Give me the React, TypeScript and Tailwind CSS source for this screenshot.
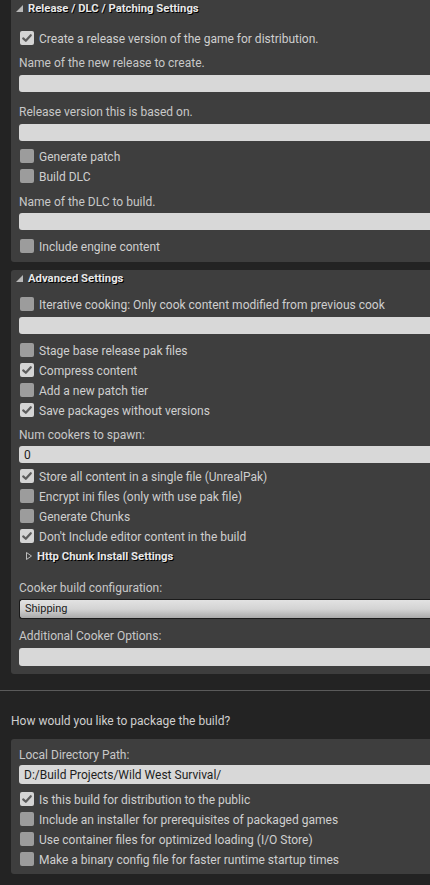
import React from "react";

function Box({ checked }: { checked?: boolean }) {
  return (
    <div
      className={`w-[14px] h-[14px] rounded-[2px] shrink-0 flex items-center justify-center ${
        checked ? "bg-[#d4d4d4]" : "bg-[#9c9c9c]"
      }`}
    >
      {checked && (
        <svg width="12" height="12" viewBox="0 0 12 12">
          <path d="M2.2 6.4 L4.8 8.8 L9.8 3.2" fill="none" stroke="#5c5c5c" strokeWidth="2.2" strokeLinecap="round" strokeLinejoin="round" />
        </svg>
      )}
    </div>
  );
}

function Check({ label, checked, className = "" }: { label: string; checked?: boolean; className?: string }) {
  return (
    <div className={`h-[20px] flex items-center pl-[9px] ${className}`}>
      <Box checked={checked} />
      <span className="ml-[5px] pt-[2px] text-[12px] text-[#cfcfcf] whitespace-nowrap">{label}</span>
    </div>
  );
}

function Label({ text, className = "" }: { text: string; className?: string }) {
  return (
    <div className={`h-[20px] flex items-center pl-[8px] text-[12px] text-[#c8c8c8] whitespace-nowrap ${className}`}>
      <span className="pt-[2px]">{text}</span>
    </div>
  );
}

function Input({ value, className = "", h = "h-[17px]" }: { value?: string; className?: string; h?: string }) {
  return (
    <div
      className={`ml-[8px] ${h} bg-[#d8d8d8] rounded-l-[3px] flex items-center pl-[5px] text-[12px] text-[#1e1e1e] whitespace-nowrap ${className}`}
    >
      <span className="pt-[1px]">{value}</span>
    </div>
  );
}

function Header({ text }: { text: string }) {
  return (
    <div className="h-[17px] flex items-center pl-[5px]">
      <svg width="7" height="7" viewBox="0 0 7 7" className="shrink-0">
        <polygon points="7,0 7,7 0,7" fill="#b8b8b8" />
      </svg>
      <span className="ml-[5px] pt-[2px] text-[11.3px] font-bold text-[#e8e8e8] [text-shadow:1px_1px_0_#000] whitespace-nowrap">
        {text}
      </span>
    </div>
  );
}

export default function App() {
  return (
    <div
      className="w-[430px] h-[885px] overflow-hidden bg-[#232323] flex flex-col"
      style={{ fontFamily: "Roboto, 'Noto Sans', sans-serif" }}
    >
      {/* Panel 1 */}
      <div className="ml-[11px] bg-[#3e3e3e] rounded-bl-[3px] pb-[6px]">
        <Header text="Release / DLC / Patching Settings" />
        <Check className="mt-[11px]" checked label="Create a release version of the game for distribution." />
        <Label className="mt-[4px]" text="Name of the new release to create." />
        <Input className="mt-[3px]" />
        <Label className="mt-[9px]" text="Release version this is based on." />
        <Input className="mt-[3px]" />
        <Check className="mt-[5px]" label="Generate patch" />
        <Check label="Build DLC" />
        <Label className="mt-[5px]" text="Name of the DLC to build." />
        <Input className="mt-[2px]" />
        <Check className="mt-[6px]" label="Include engine content" />
      </div>

      {/* Panel 2 */}
      <div className="ml-[11px] mt-[8px] bg-[#3e3e3e] rounded-l-[3px] pb-[8px]">
        <Header text="Advanced Settings" />
        <Check className="mt-[7px]" label="Iterative cooking: Only cook content modified from previous cook" />
        <Input className="mt-[3px]" />
        <Check className="mt-[6px]" label="Stage base release pak files" />
        <Check checked label="Compress content" />
        <Check label="Add a new patch tier" />
        <Check checked label="Save packages without versions" />
        <Label className="mt-[4px]" text="Num cookers to spawn:" />
        <Input className="mt-[2px]" value="0" />
        <Check className="mt-[3px]" checked label="Store all content in a single file (UnrealPak)" />
        <Check label="Encrypt ini files (only with use pak file)" />
        <Check label="Generate Chunks" />
        <Check checked label="Don't Include editor content in the build" />
        <div className="h-[20px] flex items-center pl-[15px]">
          <svg width="6" height="8" viewBox="0 0 6 8" className="shrink-0">
            <polygon points="0.5,0.5 5.5,4 0.5,7.5" fill="none" stroke="#bdbdbd" strokeWidth="1" />
          </svg>
          <span className="ml-[5px] pt-[2px] text-[11.3px] font-bold text-[#e8e8e8] [text-shadow:1px_1px_0_#000] whitespace-nowrap">
            Http Chunk Install Settings
          </span>
        </div>
        <Label className="mt-[11px]" text="Cooker build configuration:" />
        <div className="mt-[2px] ml-[8px] h-[20px] rounded-l-[3px] border border-r-0 border-[#1a1a1a] bg-gradient-to-b from-[#e2e2e2] via-[#d4d4d4] to-[#a9a9a9] flex items-center pl-[5px] text-[11px] text-[#1a1a1a]">
          <span className="pt-[1px]">Shipping</span>
        </div>
        <Label className="mt-[6px]" text="Additional Cooker Options:" />
        <Input className="mt-[3px]" h="h-[18px]" />
      </div>

      {/* divider */}
      <div className="mt-[16px] h-px bg-[#5a5a5a]" />

      <div className="mt-[19px] h-[20px] flex items-center pl-[11px] text-[12px] text-[#cfcfcf]">
        <span className="pt-[2px]">How would you like to package the build?</span>
      </div>

      {/* Panel 3 */}
      <div className="ml-[11px] mt-[9px] bg-[#3e3e3e] rounded-l-[3px] pt-[5px] pb-[5px]">
        <Label text="Local Directory Path:" />
        <Input className="mt-[1px]" h="h-[19px]" value="D:/Build Projects/Wild West Survival/" />
        <Check className="mt-[5px]" checked label="Is this build for distribution to the public" />
        <Check label="Include an installer for prerequisites of packaged games" />
        <Check label="Use container files for optimized loading (I/O Store)" />
        <Check label="Make a binary config file for faster runtime startup times" />
      </div>
    </div>
  );
}
